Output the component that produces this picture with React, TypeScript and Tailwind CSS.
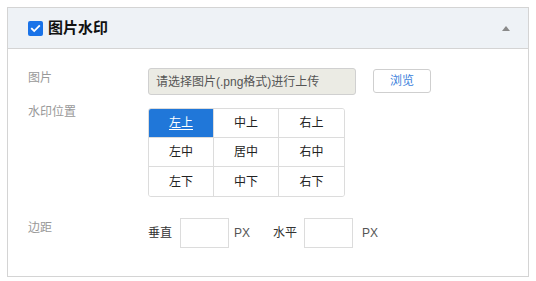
import { useState } from 'react';

const positions = ['左上', '中上', '右上', '左中', '居中', '右中', '左下', '中下', '右下'];

function PositionGrid() {
  const [active, setActive] = useState(0);

  return (
    <div className="grid grid-cols-[65px_65px_65px] border border-[#dcdcdc] rounded-[3px] overflow-hidden">
      {positions.map((p, i) => {
        const isActive = i === active;
        const col = i % 3;
        const row = Math.floor(i / 3);
        return (
          <button
            key={p}
            type="button"
            onClick={() => setActive(i)}
            className={`${row === 0 ? 'h-[29px]' : 'h-[29px]'} flex items-center justify-center text-[12px] ${
              col < 2 ? 'border-r border-[#dcdcdc]' : ''
            } ${row < 2 ? 'border-b border-[#dcdcdc]' : ''} ${
              isActive ? 'bg-[#2077d9] text-white underline underline-offset-2' : 'bg-white text-[#222]'
            }`}
          >
            {p}
          </button>
        );
      })}
    </div>
  );
}

export default function App() {
  const [checked, setChecked] = useState(true);

  return (
    <div className="w-[536px] h-[281px] bg-white pt-[7px] pl-[7px] font-['Liberation_Sans','Noto_Sans_CJK_SC',sans-serif]">
      <div className="w-[522px] h-[270px] border border-[#d4d4d4]">
        {/* Header */}
        <div className="h-[41px] bg-[#eef2f6] border-b border-[#d4d4d4] flex items-center justify-between pl-[20px] pr-[18px]">
          <label className="flex items-center gap-[5px] cursor-pointer" onClick={() => setChecked((v) => !v)}>
            <span className={`w-[15px] h-[15px] rounded-[2px] flex items-center justify-center ${checked ? 'bg-[#1a73e8]' : 'bg-white border border-[#999]'}`}>
              {checked && (
                <svg width="11" height="11" viewBox="0 0 12 12" fill="none">
                  <path d="M2 6.2l2.6 2.6L10 3.4" stroke="white" strokeWidth="2" strokeLinecap="square" />
                </svg>
              )}
            </span>
            <span className="text-[15px] font-bold text-[#111] leading-5">图片水印</span>
          </label>
          <svg width="8" height="5" viewBox="0 0 8 5">
            <path d="M4 0L8 5H0z" fill="#8a8a8a" />
          </svg>
        </div>

        {/* Body */}
        <div className="pl-[20px] pt-[19px]">
          <div className="flex items-start">
            <div className="w-[120px] text-[12px] leading-5 text-[#999]">图片</div>
            <div className="w-[208px] h-[27px] bg-[#ebebe4] border border-[#d0d0d0] rounded-[3px] flex items-center pl-[7px] text-[12px] text-[#555]">
              请选择图片(.png格式)进行上传
            </div>
            <button
              type="button"
              className="ml-[17px] mt-px w-[58px] h-[24px] border border-[#cfcfcf] rounded-[3px] bg-white text-[12px] text-[#3a7fdc]"
            >
              浏览
            </button>
          </div>

          <div className="flex items-start mt-[7px]">
            <div className="w-[120px] text-[12px] leading-5 text-[#999]">水印位置</div>
            <div className="mt-[6px]">
              <PositionGrid />
            </div>
          </div>

          <div className="flex items-start mt-[21px]">
            <div className="w-[120px] text-[12px] leading-5 text-[#999]">边距</div>
            <div className="flex items-center text-[12px]">
              <span className="text-[#333]">垂直</span>
              <input className="ml-[8px] w-[49px] h-[30px] border border-[#dcdcdc] outline-none" />
              <span className="ml-[5px] text-[#555]">PX</span>
              <span className="ml-[23px] text-[#333]">水平</span>
              <input className="ml-[7px] w-[49px] h-[30px] border border-[#dcdcdc] outline-none" />
              <span className="ml-[9px] text-[#555]">PX</span>
            </div>
          </div>
        </div>
      </div>
    </div>
  );
}
